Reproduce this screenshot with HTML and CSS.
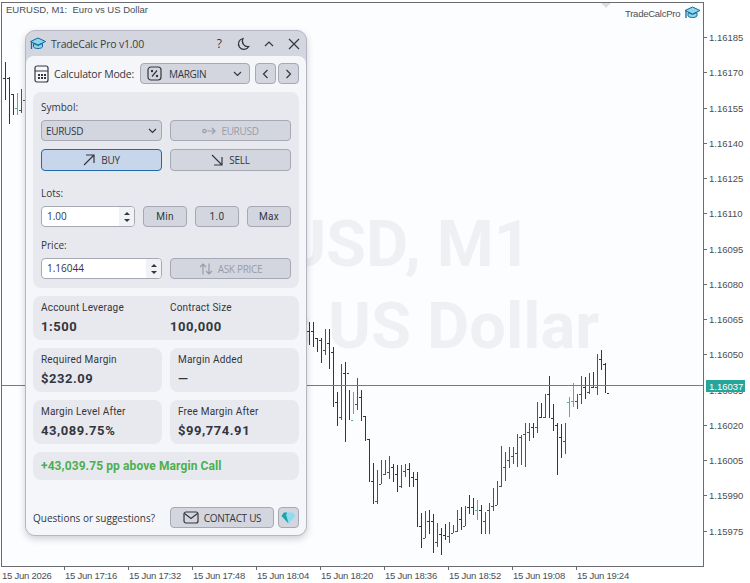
FILE: index.html
```html
<!DOCTYPE html>
<html lang="en">
<head>
    <meta charset="UTF-8">
    <title>TradeCalc Pro</title>
    <link rel="stylesheet" href="styles.css">
</head>
<body>
    <!-- Chart behind the panel -->
    <svg class="chart" id="chart" width="750" height="583" viewBox="0 0 750 583">
        <rect class="plot" x="1.5" y="2.5" width="702" height="564"/>
        <text class="watermark" x="531" y="266">USD, M1</text>
        <text class="watermark" x="599" y="348">s US Dollar</text>
        <path class="collapse" d="M601 3h10l-5 5z"/>
        <g id="bars"></g>
        <path class="price-line" d="M2 385.5H703"/>
        <path class="ticks" d="M703 37.5h4M703 72.5h4M703 108.5h4M703 143.5h4M703 178.5h4M703 213.5h4M703 249.5h4M703 284.5h4M703 319.5h4M703 354.5h4M703 425.5h4M703 460.5h4M703 495.5h4M703 531.5h4M64.5 566v4M128.5 566v4M192.5 566v4M256.5 566v4M320.5 566v4M384.5 566v4M448.5 566v4M512.5 566v4M576.5 566v4"/>
        <text class="axis" x="709" y="41">1.16185</text>
        <text class="axis" x="709" y="76">1.16170</text>
        <text class="axis" x="709" y="112">1.16155</text>
        <text class="axis" x="709" y="147">1.16140</text>
        <text class="axis" x="709" y="182">1.16125</text>
        <text class="axis" x="709" y="217">1.16110</text>
        <text class="axis" x="709" y="253">1.16095</text>
        <text class="axis" x="709" y="288">1.16080</text>
        <text class="axis" x="709" y="323">1.16065</text>
        <text class="axis" x="709" y="358">1.16050</text>
        <text class="axis" x="709" y="394">1.16035</text>
        <text class="axis" x="709" y="429">1.16020</text>
        <text class="axis" x="709" y="464">1.16005</text>
        <text class="axis" x="709" y="499">1.15990</text>
        <text class="axis" x="709" y="535">1.15975</text>
        <rect class="price-tag" x="706" y="380" width="39" height="12"/>
        <text class="price-tag-text" x="709" y="390">1.16037</text>
        <text class="axis time" x="2" y="579">15 Jun 2026</text>
        <text class="axis time" x="65" y="579">15 Jun 17:16</text>
        <text class="axis time" x="129" y="579">15 Jun 17:32</text>
        <text class="axis time" x="193" y="579">15 Jun 17:48</text>
        <text class="axis time" x="257" y="579">15 Jun 18:04</text>
        <text class="axis time" x="321" y="579">15 Jun 18:20</text>
        <text class="axis time" x="385" y="579">15 Jun 18:36</text>
        <text class="axis time" x="449" y="579">15 Jun 18:52</text>
        <text class="axis time" x="513" y="579">15 Jun 19:08</text>
        <text class="axis time" x="577" y="579">15 Jun 19:24</text>
        <text class="axis" x="6" y="13">EURUSD, M1:  Euro vs US Dollar</text>
        <text class="axis time" x="625" y="17">TradeCalcPro</text>
        <g transform="translate(685 6)">
            <path class="cap-top" d="M7.5 1 15 4.5 7.5 8 0 4.5z"/>
            <path class="cap-top" d="M3 6.5V10c1.5 2 7.5 2 9 0V6.5L7.5 8.5z"/>
            <path class="cap-cord" d="M1 5v7"/>
        </g>
    </svg>

    <!-- Calculator panel -->
    <div class="panel">
        <div class="title-bar">
            <svg class="logo" width="16" height="14" viewBox="0 0 16 14">
                <path class="cap-top" d="M8 1 15.5 4.5 8 8 .5 4.5z"/>
                <path class="cap-top" d="M3.5 6.5V10c1.500 2 7.500 2 9 0V6.500L8 8.500z"/>
                <path class="cap-cord" d="M1.500 5v7"/>
            </svg>
            <span class="title">TradeCalc Pro v1.00</span>
            <div class="title-icons">
                <span class="help">?</span>
                <svg width="14" height="14" viewBox="0 0 14 14"><path class="line" d="M7 1.500a5.500 5.500 0 1 0 5.800 8A5.500 5.500 0 0 1 7 1.500z"/></svg>
                <svg width="12" height="12" viewBox="0 0 12 12"><path class="line" d="M2 8l4-4 4 4"/></svg>
                <svg width="12" height="12" viewBox="0 0 12 12"><path class="line" d="M1 1l10 10M11 1 1 11"/></svg>
            </div>
        </div>
        <div class="panel-body">
            <div class="mode-row">
                <svg width="15" height="18" viewBox="0 0 15 18">
                    <rect class="line" x="1" y="1" width="13" height="16" rx="2"/>
                    <path class="line" d="M1 6h13"/>
                    <path class="dots" d="M4 9h2v2H4zM7 9h2v2H7zM10 9h2v2h-2zM4 12h2v2H4zM7 12h2v2H7zM10 12h2v2h-2z"/>
                </svg>
                <span class="mode-label">Calculator Mode:</span>
                <div class="control mode-select">
                    <svg width="15" height="15" viewBox="0 0 15 15">
                        <rect class="line" x="1" y="1" width="13" height="13" rx="3"/>
                        <path class="line" d="M5 10.500 10 4.500"/>
                        <circle class="dot" cx="5" cy="5" r="1.200"/>
                        <circle class="dot" cx="10" cy="10" r="1.200"/>
                    </svg>
                    <span>MARGIN</span>
                    <svg class="caret" width="9" height="6" viewBox="0 0 9 6"><path class="line" d="M1 1l3.500 3.500L8 1"/></svg>
                </div>
                <div class="control nav-btn"><svg width="7" height="10" viewBox="0 0 7 10"><path class="line" d="M5.500 1 1.500 5l4 4"/></svg></div>
                <div class="control nav-btn"><svg width="7" height="10" viewBox="0 0 7 10"><path class="line" d="M1.500 1l4 4-4 4"/></svg></div>
            </div>

            <div class="section">
                <div class="field-label">Symbol:</div>
                <div class="two-col">
                    <div class="control select-box">
                        <span>EURUSD</span>
                        <svg class="caret" width="9" height="6" viewBox="0 0 9 6"><path class="line" d="M1 1l3.500 3.500L8 1"/></svg>
                    </div>
                    <div class="control disabled">
                        <svg width="14" height="8" viewBox="0 0 14 8"><circle class="line" cx="2.500" cy="4" r="1.700"/><path class="line" d="M5.500 4H13M10 1l3 3-3 3"/></svg>
                        <span>EURUSD</span>
                    </div>
                </div>
                <div class="two-col side-row">
                    <div class="control side-btn buy">
                        <svg width="12" height="12" viewBox="0 0 12 12"><path class="line" d="M1 11 11 1M3 1h8v8"/></svg>
                        <span>BUY</span>
                    </div>
                    <div class="control side-btn">
                        <svg width="12" height="12" viewBox="0 0 12 12"><path class="line" d="M1 1l10 10M3 11h8V3"/></svg>
                        <span>SELL</span>
                    </div>
                </div>

                <div class="field-label lots-label">Lots:</div>
                <div class="lots-row">
                    <div class="spin-input">
                        <span class="spin-value">1.00</span>
                        <span class="spinner"><i class="arrow-up"></i><i class="arrow-down"></i></span>
                    </div>
                    <div class="control preset">Min</div>
                    <div class="control preset">1.0</div>
                    <div class="control preset">Max</div>
                </div>

                <div class="field-label price-label">Price:</div>
                <div class="two-col">
                    <div class="spin-input">
                        <span class="spin-value">1.16044</span>
                        <span class="spinner"><i class="arrow-up"></i><i class="arrow-down"></i></span>
                    </div>
                    <div class="control disabled">
                        <svg width="14" height="12" viewBox="0 0 14 12"><path class="line" d="M4 11.500V1M1 4l3-3 3 3M10 .5V11M7 8l3 3 3-3"/></svg>
                        <span>ASK PRICE</span>
                    </div>
                </div>
            </div>

            <div class="card card-wide">
                <div>
                    <div class="card-label">Account Leverage</div>
                    <div class="card-value">1:500</div>
                </div>
                <div>
                    <div class="card-label">Contract Size</div>
                    <div class="card-value">100,000</div>
                </div>
            </div>

            <div class="card-grid">
                <div class="card">
                    <div class="card-label">Required Margin</div>
                    <div class="card-value">$232.09</div>
                </div>
                <div class="card">
                    <div class="card-label">Margin Added</div>
                    <div class="card-value">—</div>
                </div>
                <div class="card">
                    <div class="card-label">Margin Level After</div>
                    <div class="card-value">43,089.75%</div>
                </div>
                <div class="card">
                    <div class="card-label">Free Margin After</div>
                    <div class="card-value">$99,774.91</div>
                </div>
            </div>

            <div class="status">+43,039.75 pp above Margin Call</div>

            <div class="footer">
                <span class="question">Questions or suggestions?</span>
                <div class="control contact">
                    <svg width="16" height="13" viewBox="0 0 16 13"><rect class="line" x="1" y="1" width="14" height="11" rx="2"/><path class="line" d="M1.500 2.500 8 7.500l6.500-5"/></svg>
                    <span>CONTACT US</span>
                </div>
                <div class="control gem">
                    <svg width="15" height="12" viewBox="0 0 15 12">
                        <path fill="#8fdcf0" d="M3 .5h9L14.500 4 7.500 11.500.5 4z"/>
                        <path fill="#1fa3a8" d="M.5 4h5l2 7.500zM3 .5h3L5 4H.5z"/>
                    </svg>
                </div>
            </div>
        </div>
    </div>

    <script src="chart.js"></script>
</body>
</html>
```

FILE: styles.css
```css
* {
    box-sizing: border-box;
}
body {
    margin: 0;
    width: 750px;
    height: 583px;
    overflow: hidden;
    background-color: #fff;
    font-family: "Open Sans", sans-serif;
    color: #33363d;
}

/* Chart */
.chart {
    position: absolute;
    left: 0;
    top: 0;
}
.plot {
    fill: #fcfdff;
    stroke: #6a6c72;
    shape-rendering: crispEdges;
}
.watermark {
    font-family: Roboto, sans-serif;
    font-weight: 700;
    font-size: 65px;
    fill: #eff0f3;
    text-anchor: end;
}
.collapse {
    fill: #dcdde0;
}
.price-line {
    stroke: #2e9e8e;
    shape-rendering: crispEdges;
}
.ticks {
    stroke: #6a6c72;
    shape-rendering: crispEdges;
}
.axis {
    font-family: "Liberation Sans", sans-serif;
    font-size: 9.500px;
    fill: #4b4e55;
    white-space: pre;
}
.time {
    letter-spacing: -0.25px;
}
.price-tag {
    fill: #26a69a;
}
.price-tag-text {
    font-family: "Liberation Sans", sans-serif;
    font-size: 9.500px;
    fill: #fff;
}
.bar-up {
    stroke: #4d535c;
    fill: none;
    shape-rendering: crispEdges;
}
.bar-down {
    stroke: #33363c;
    fill: none;
    shape-rendering: crispEdges;
}
.bar-green {
    stroke: #5fb27f;
    fill: none;
    shape-rendering: crispEdges;
}
.cap-top {
    fill: #8fd6ea;
    stroke: #11689a;
    stroke-width: 1;
}
.cap-cord {
    stroke: #11689a;
    stroke-width: 1.300;
    fill: none;
}

/* Panel */
.panel {
    position: absolute;
    left: 25px;
    top: 30px;
    width: 282px;
    border: 1px solid #b4b7c1;
    border-radius: 10px;
    background-color: #d3d6df;
    box-shadow: 0 3px 7px rgba(40, 44, 60, 0.22);
    overflow: hidden;
}
.title-bar {
    display: flex;
    align-items: center;
    height: 25px;
    padding: 0 6px 0 4px;
}
.logo {
    margin-right: 5px;
}
.title {
    font-size: 10.500px;
    letter-spacing: -0.2px;
    color: #3a3d44;
}
.title-icons {
    display: flex;
    align-items: center;
    gap: 13px;
    margin-left: auto;
}
.help {
    font-size: 12px;
    margin-right: 1px;
}
.line {
    fill: none;
    stroke: #33363d;
    stroke-width: 1.200;
}
.dots,
.dot {
    fill: #33363d;
}
.panel-body {
    padding: 7px 7px 7px;
    background-color: #f5f6fa;
    border-radius: 8px 8px 0 0;
}
.mode-row {
    display: flex;
    align-items: center;
    height: 21px;
    padding-left: 1px;
}
.mode-label {
    flex: 1;
    margin: 0 5px 0 5px;
    font-size: 10.500px;
    letter-spacing: -0.18px;
    white-space: nowrap;
}
.control {
    display: flex;
    align-items: center;
    justify-content: center;
    height: 21px;
    background-color: #d3d6df;
    border: 1px solid #a6a9b3;
    border-radius: 4px;
    font-size: 10px;
    letter-spacing: -0.3px;
    white-space: nowrap;
}
.mode-select {
    justify-content: flex-start;
    gap: 7px;
    width: 110px;
    padding: 0 7px 0 6px;
}
.caret {
    margin-left: auto;
}
.nav-btn {
    width: 21px;
    margin-left: 2px;
}
.mode-select + .nav-btn {
    margin-left: 5px;
}

.section {
    margin-top: 8px;
    padding: 8px 8px 9px;
    background-color: #e8e9ef;
    border-radius: 8px;
}
.field-label {
    height: 20px;
    font-size: 10px;
    line-height: 15px;
}
.lots-label {
    margin-top: 15px;
}
.price-label {
    margin-top: 11px;
}
.two-col {
    display: grid;
    grid-template-columns: 121px 121px;
    gap: 8px;
}
.select-box {
    justify-content: flex-start;
    padding: 0 4px;
}
.disabled {
    gap: 5px;
    color: #9a9da6;
}
.disabled .line {
    stroke: #9a9da6;
}
.side-row {
    margin-top: 8px;
}
.side-btn {
    gap: 6px;
    height: 22px;
}
.buy {
    background-color: #c8d6ec;
    border-color: #1e6aa8;
}
.lots-row {
    display: flex;
    gap: 8px;
}
.lots-row .spin-input {
    width: 94px;
}
.preset {
    width: 44px;
    font-family: Roboto, sans-serif;
    letter-spacing: 0.3px;
}
.spin-input {
    display: flex;
    height: 21px;
    background-color: #fff;
    border: 1px solid #a6a9b3;
    border-radius: 4px;
    overflow: hidden;
}
.spin-value {
    flex: 1;
    padding-left: 5px;
    font-size: 10px;
    line-height: 19px;
}
.spinner {
    display: flex;
    flex-direction: column;
    align-items: center;
    justify-content: center;
    gap: 4px;
    width: 15px;
    background-color: #f1f2f6;
}
.arrow-up,
.arrow-down {
    width: 0;
    height: 0;
    border-left: 3px solid transparent;
    border-right: 3px solid transparent;
}
.arrow-up {
    border-bottom: 3px solid #33363d;
}
.arrow-down {
    border-top: 3px solid #33363d;
}

.card {
    height: 44px;
    padding: 5px 8px 0;
    background-color: #e8e9ef;
    border-radius: 8px;
}
.card-wide {
    display: grid;
    grid-template-columns: 121px 121px;
    gap: 8px;
    margin-top: 8px;
}
.card-grid {
    display: grid;
    grid-template-columns: 129px 129px;
    gap: 8px;
    margin-top: 8px;
}
.card-label {
    font-family: Roboto, sans-serif;
    font-size: 10px;
    line-height: 14px;
    letter-spacing: 0.2px;
}
.card-value {
    margin-top: 4px;
    font-family: Roboto, sans-serif;
    font-weight: 700;
    font-size: 13px;
    line-height: 16px;
    letter-spacing: 0.55px;
}
.status {
    height: 28px;
    margin-top: 8px;
    padding-left: 8px;
    background-color: #e8e9ef;
    border-radius: 8px;
    font-family: Roboto, sans-serif;
    font-weight: 700;
    font-size: 12px;
    letter-spacing: 0.1px;
    line-height: 28px;
    color: #4caf50;
}
.footer {
    display: flex;
    align-items: center;
    margin-top: 27px;
}
.question {
    width: 137px;
    font-size: 10px;
    white-space: nowrap;
}
.contact {
    gap: 5px;
    width: 104px;
}
.gem {
    width: 21px;
    margin-left: 4px;
}
```

FILE: chart.js
```js
// bars as [top, bottom, close, color]
const NS = "http://www.w3.org/2000/svg";

const leftBars = [
    [62, 100, 78], [77, 124, 94], [94, 115, 108], [93, 115, 110, "g"], [89, 113, 100]
];

const rightBars = [
    [322, 345, 331], [322, 347, 338], [338, 352, 340], [338, 363, 350], [329, 355, 343],
    [329, 369, 352], [347, 407, 402], [392, 426, 417], [364, 420, 373], [362, 442, 373],
    [390, 420, 420], [392, 414, 404, "g"], [378, 410, 397], [390, 421, 416], [416, 441, 439],
    [439, 482, 481], [463, 504, 501], [470, 504, 484], [460, 484, 474], [460, 475, 472],
    [456, 479, 467], [464, 482, 474], [465, 492, 486], [465, 488, 471], [464, 477, 469],
    [463, 487, 477], [472, 487, 479], [472, 527, 526], [513, 548, 538], [511, 538, 521],
    [510, 534, 521], [514, 553, 542], [523, 547, 534], [528, 555, 535], [524, 540, 536],
    [522, 543, 533], [525, 533, 531], [510, 532, 519], [507, 530, 526], [506, 526, 507],
    [495, 514, 507], [498, 515, 510], [500, 520, 510, "g"], [505, 534, 521], [512, 534, 510],
    [503, 534, 506], [488, 511, 505], [481, 505, 486], [446, 487, 467], [452, 481, 460],
    [447, 468, 456], [447, 464, 453], [434, 467, 437], [435, 465, 434], [423, 467, 432],
    [423, 441, 427], [423, 438, 427], [402, 433, 417], [403, 418, 417], [394, 418, 394],
    [376, 418, 418], [404, 431, 425], [423, 475, 437], [424, 458, 441], [423, 454, 402],
    [397, 417, 401, "g"], [383, 407, 401, "g"], [394, 409, 394], [376, 404, 387], [377, 399, 392],
    [373, 394, 387], [372, 388, 387], [354, 395, 359], [350, 370, 364], [363, 393, 393]
];

function drawBars(bars, startX) {
    const group = document.getElementById("bars");
    let open = bars[0][2];
    bars.forEach(function (bar, i) {
        const x = startX + i * 4 + 0.5;
        const close = bar[2];
        const path = document.createElementNS(NS, "path");
        path.setAttribute("d",
            "M" + x + " " + bar[0] + "V" + bar[1] +
            "M" + (x - 3) + " " + (open + 0.5) + "h2" +
            "M" + (x + 1) + " " + (close + 0.5) + "h2");
        let cls = close < open ? "bar-up" : "bar-down";
        if (bar[3] === "g") {
            cls = "bar-green";
        }
        path.setAttribute("class", cls);
        group.appendChild(path);
        open = close;
    });
}

drawBars(leftBars, 5);
drawBars(rightBars, 309);
```
